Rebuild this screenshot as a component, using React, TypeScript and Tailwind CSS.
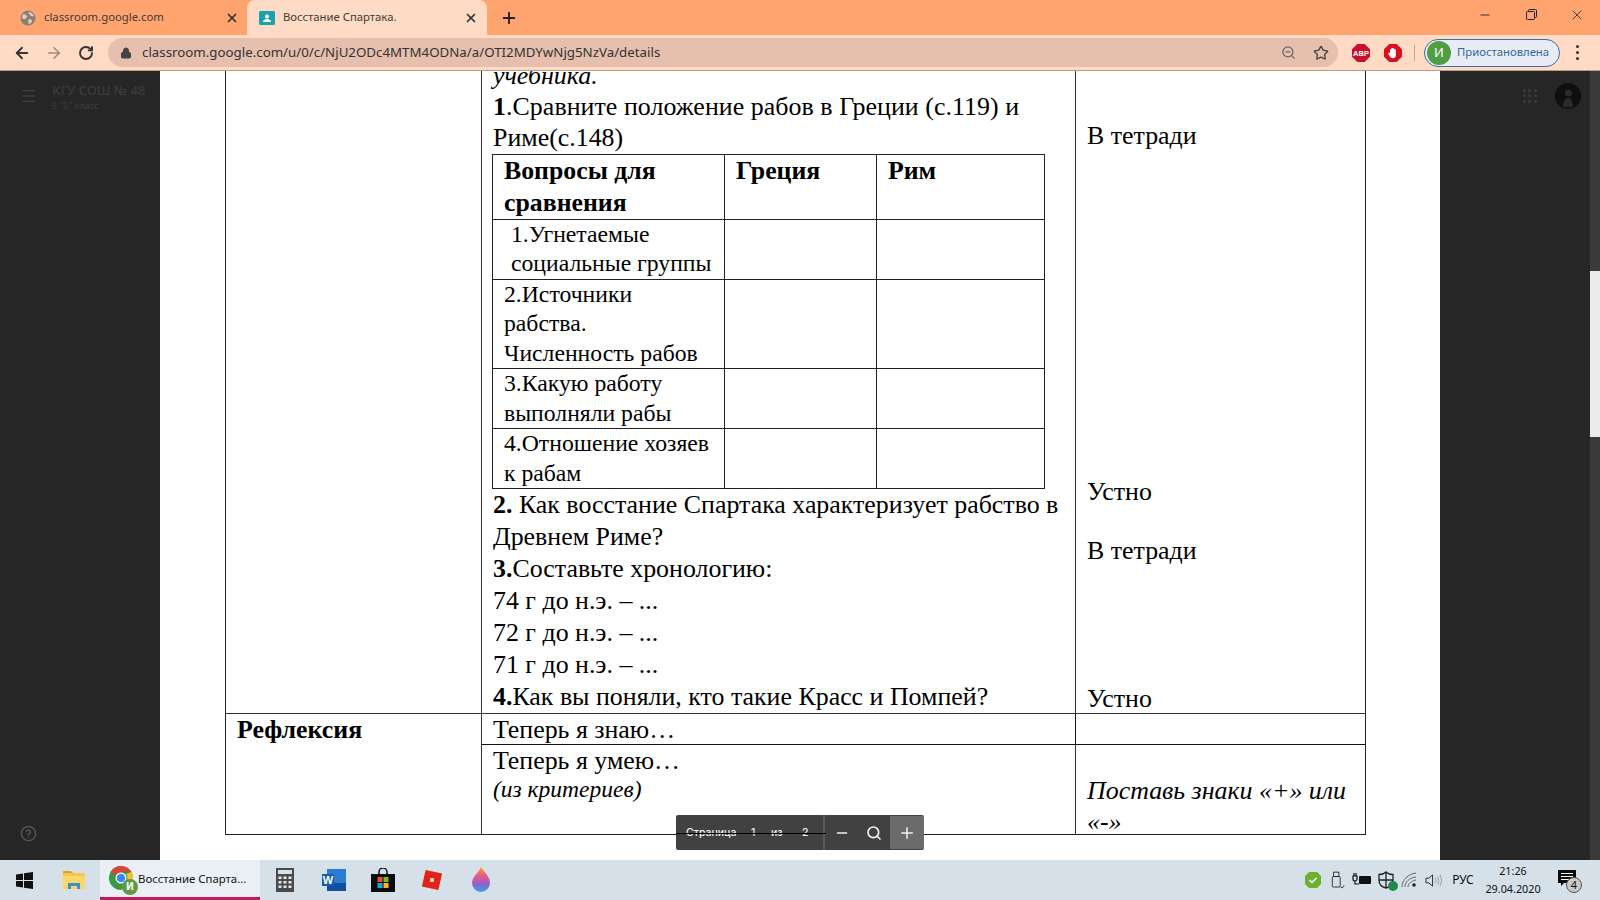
import { ArrowLeft, ArrowRight, RotateCw, Lock, ZoomOut, Search, Star, X, Plus, Minus, Menu, HelpCircle } from 'lucide-react';

const ui = 'font-["Noto_Sans",sans-serif]';

const GlobeIcon = () => (
  <svg viewBox="0 0 16 16" className="w-[16px] h-[16px]">
    <circle cx="8" cy="8" r="7.5" fill="#8a8078" />
    <path d="M3 4c2 0 3 1 4 2s-1 2-2 3-2-1-3-1zM9 2c2 0 4 2 5 4-2 1-3 0-4-1s-2-2-1-3zM9 9c2 0 3 1 3 2s-2 3-3 3-1-4 0-5z" fill="#e8c9b3" />
  </svg>
);

const ClassroomIcon = () => (
  <svg viewBox="0 0 16 16" className="w-[16px] h-[16px]">
    <rect x="0" y="1" width="16" height="14" rx="1.5" fill="#17a2ad" />
    <circle cx="8" cy="6.5" r="2" fill="#fff" />
    <path d="M4 12c0-2 2-3 4-3s4 1 4 3z" fill="#fff" />
  </svg>
);

const AbpIcon = () => (
  <svg viewBox="0 0 18 18" className="w-[18px] h-[18px]">
    <path d="M5.3 0h7.4L18 5.3v7.4L12.7 18H5.3L0 12.7V5.3z" fill="#c8102e" />
    <text x="9" y="12" textAnchor="middle" fontSize="7.5" fontWeight="700" fill="#fff" fontFamily="Liberation Sans">ABP</text>
  </svg>
);

const StopIcon = () => (
  <svg viewBox="0 0 18 18" className="w-[18px] h-[18px]">
    <path d="M5.3 0h7.4L18 5.3v7.4L12.7 18H5.3L0 12.7V5.3z" fill="#d6121f" />
    <path d="M6 9V5.5a.8.8 0 0 1 1.4 0V4.2a.8.8 0 0 1 1.5 0v.6a.8.8 0 0 1 1.5 0v1a.8.8 0 0 1 1.5 0V11c0 2-1.3 3.2-3 3.2-1.600 0-2.400-.8-3.200-2.200L4.300 9.800c-.5-.8.5-1.500 1.100-.9z" fill="#fff" />
  </svg>
);

const RestoreIcon = () => (
  <svg viewBox="0 0 11 11" className="w-[11px] h-[11px]" fill="none" stroke="#222" strokeWidth="1">
    <rect x="0.5" y="2.500" width="8" height="8" rx="1" />
    <path d="M2.500 2.500V1.500a1 1 0 0 1 1-1h6a1 1 0 0 1 1 1v6a1 1 0 0 1-1 1h-1" />
  </svg>
);

const WinIcon = () => (
  <svg viewBox="0 0 17 17" className="w-[17px] h-[17px]" fill="#111">
    <path d="M0 2.400 7 1.400V8H0zM8 1.300 17 0v8H8zM0 9h7v6.600l-7-1zM8 9h9v8l-9-1.300z" />
  </svg>
);

const FolderIcon = () => (
  <svg viewBox="0 0 22 20" className="w-[22px] h-[20px]">
    <path d="M0 2a1 1 0 0 1 1-1h7l2 2h-10z" fill="#d9a520" />
    <rect x="0" y="3" width="22" height="16" fill="#f4c64f" />
    <rect x="0" y="6" width="22" height="13" fill="#fbd76b" />
    <path d="M5 19v-6h12v6h-3v-3H8v3z" fill="#3f8fcf" />
  </svg>
);

const ChromeIcon = () => (
  <div className="relative w-[26px] h-[26px]">
    <svg viewBox="0 0 24 24" className="w-[24px] h-[24px]">
      <circle cx="12" cy="12" r="12" fill="#3a9a4a" />
      <path d="M12 0a12 12 0 0 1 10.400 6H12a6 6 0 0 0-5.800 4.500L2.200 5A12 12 0 0 1 12 0z" fill="#d9453a" />
      <path d="M22.400 6A12 12 0 0 1 12 24l4.500-7.500A6 6 0 0 0 17 8z" fill="#f3c02e" />
      <circle cx="12" cy="12" r="5.500" fill="#fff" />
      <circle cx="12" cy="12" r="4.300" fill="#4285f4" />
    </svg>
    <div className="absolute right-[-3px] bottom-[-3px] w-[16px] h-[16px] rounded-full bg-[#5e9b46] text-white text-[10px] font-bold flex items-center justify-center">И</div>
  </div>
);

const CalcIcon = () => (
  <svg viewBox="0 0 18 24" className="w-[18px] h-[24px]">
    <rect width="18" height="24" fill="#4a4a4a" />
    <rect x="2" y="2" width="14" height="4" fill="#d8e1e8" />
    {[8.5, 13, 17.5].map(y => [2.500, 7.500, 12.500].map(x => <rect key={`${x}-${y}`} x={x} y={y} width="3" height="2.500" fill="#e5e5e5" />))}
  </svg>
);

const WordIcon = () => (
  <svg viewBox="0 0 24 22" className="w-[24px] h-[22px]">
    <rect x="5" y="0" width="19" height="22" fill="#2b7cd3" />
    <rect x="5" y="14" width="19" height="8" fill="#124d9e" />
    <rect x="0" y="5" width="12" height="12" fill="#1a5cae" />
    <text x="6" y="15" textAnchor="middle" fontSize="11" fontWeight="700" fill="#fff" fontFamily="Liberation Sans">W</text>
  </svg>
);

const StoreIcon = () => (
  <svg viewBox="0 0 24 24" className="w-[24px] h-[24px]">
    <path d="M8 6V4a4 4 0 0 1 8 0v2" fill="none" stroke="#111" strokeWidth="1.500" />
    <rect x="0" y="6" width="24" height="18" fill="#0c0c0c" />
    <rect x="6.500" y="9" width="5" height="5" fill="#e8502e" />
    <rect x="12.500" y="9" width="5" height="5" fill="#7fb91e" />
    <rect x="6.500" y="15" width="5" height="5" fill="#1ba4e6" />
    <rect x="12.500" y="15" width="5" height="5" fill="#f6b80e" />
  </svg>
);

const RobloxIcon = () => (
  <svg viewBox="0 0 24 24" className="w-[22px] h-[22px]">
    <path d="M5 1 23 5 19 23 1 19z" fill="#e2231a" />
    <rect x="10" y="10" width="4" height="4" fill="#f4e5e2" />
  </svg>
);

const PaintIcon = () => (
  <svg viewBox="0 0 20 26" className="w-[20px] h-[26px]">
    <defs>
      <linearGradient id="drop" x1="0" y1="0" x2="0" y2="1">
        <stop offset="0" stopColor="#f6a623" />
        <stop offset="0.35" stopColor="#e8598a" />
        <stop offset="0.7" stopColor="#8a63d2" />
        <stop offset="1" stopColor="#2fa8e0" />
      </linearGradient>
    </defs>
    <path d="M10 0c2 4 9 9 9 16a9 9 0 0 1-18 0C1 10 8 5 10 0z" fill="url(#drop)" />
  </svg>
);

const TrayShield = () => (
  <svg viewBox="0 0 16 16" className="w-[16px] h-[16px]">
    <path d="M4 0h8l4 4v8l-4 4H4l-4-4V4z" fill="#6cb02e" />
    <path d="M4.500 8l2.500 2.500 4.500-4.500" stroke="#fff" strokeWidth="1.500" fill="none" />
  </svg>
);

const UsbIcon = () => (
  <svg viewBox="0 0 16 20" className="w-[14px] h-[18px]" fill="none" stroke="#222" strokeWidth="1">
    <rect x="3" y="1" width="6" height="5" />
    <rect x="1.500" y="6" width="9" height="12" rx="1" />
    <path d="M11 18l2 1 2-3" />
  </svg>
);

const PowerIcon = () => (
  <svg viewBox="0 0 20 14" className="w-[20px] h-[14px]">
    <rect x="7" y="3" width="12" height="8" rx="1" fill="#111" />
    <path d="M1 3v3a2 2 0 0 0 4 0V3zM2 0v3M4 0v3M3 8v3h4" stroke="#111" fill="none" strokeWidth="1.200" />
  </svg>
);

const DefenderIcon = () => (
  <div className="relative w-[18px] h-[18px]">
    <svg viewBox="0 0 18 18" className="w-[18px] h-[18px]" fill="none" stroke="#222" strokeWidth="1.300">
      <path d="M9 1c2 2 4 2.500 7 2.500V9c0 4-3 7-7 8-4-1-7-4-7-8V3.500C5 3.500 7 3 9 1zM9 1v16M2 9h14" />
    </svg>
    <div className="absolute right-[-3px] bottom-[-2px] w-[10px] h-[10px] rounded-full bg-[#1f8a4c]" />
  </div>
);

const WifiIcon = () => (
  <svg viewBox="0 0 18 16" className="w-[18px] h-[16px]" fill="none" stroke="#666" strokeWidth="1">
    <path d="M1 15C1 8 7 2 15 1M4 15c0-5 4-9 11-10M7 15c0-3 3-6 8-7" />
    <circle cx="13" cy="13" r="1.800" fill="#222" stroke="none" />
  </svg>
);

const VolumeIcon = () => (
  <svg viewBox="0 0 18 16" className="w-[17px] h-[15px]" fill="none" stroke="#222" strokeWidth="1">
    <path d="M1 5.500h3L8 2v12l-4-3.500H1z" />
    <path d="M11 5c1 2 1 4 0 6M13.500 3.500c1.500 3 1.500 6 0 9M16 2c2 4 2 8 0 12" stroke="#999" />
  </svg>
);

const NotifyIcon = () => (
  <div className="relative w-[20px] h-[20px]">
    <svg viewBox="0 0 18 17" className="w-[18px] h-[17px]">
      <path d="M0 0h18v13H6l-3 3v-3H0z" fill="#0c0c0c" />
      <path d="M3 3.500h12M3 6.500h12M3 9.500h8" stroke="#fff" strokeWidth="1" />
    </svg>
    <div className="absolute left-[8px] top-[7px] w-[16px] h-[16px] rounded-full bg-[#c9c9c9] border border-[#555] text-[#111] text-[11px] flex items-center justify-center">4</div>
  </div>
);

const rows = [
  { pad: 'pl-[18px] pr-0', h: 'h-[59px]', lines: ['1.Угнетаемые', 'социальные группы'] },
  { pad: 'pl-[11px]', h: 'h-[89.5px]', lines: ['2.Источники', 'рабства.', 'Численность рабов'] },
  { pad: 'pl-[11px]', h: 'h-[59.5px]', lines: ['3.Какую работу', 'выполняли рабы'] },
  { pad: 'pl-[11px]', h: 'h-[59.5px]', lines: ['4.Отношение хозяев', 'к рабам'] },
];

function CompareTable() {
  return (
    <table className="-ml-px table-fixed w-[553px] border-collapse border-[1.5px] border-[#222] text-[23.7px]">
      <colgroup>
        <col className="w-[232px]" />
        <col className="w-[152px]" />
        <col />
      </colgroup>
      <tbody>
        <tr className="h-[64.500px] align-top font-bold leading-[32px]">
          <td className="border-[1.5px] border-[#222] pl-[11px] text-[25.8px]">Вопросы для<br />сравнения</td>
          <td className="border-[1.5px] border-[#222] pl-[11px] text-[25.8px]">Греция</td>
          <td className="border-[1.5px] border-[#222] pl-[11px] text-[25.8px]">Рим</td>
        </tr>
        {rows.map(r => (
          <tr key={r.lines[0]} className={`${r.h} align-top leading-[29.5px]`}>
            <td className={`border-[1.5px] border-[#222] whitespace-nowrap ${r.pad}`}>
              {r.lines.map(l => <div key={l}>{l}</div>)}
            </td>
            <td className="border-[1.5px] border-[#222]" />
            <td className="border-[1.5px] border-[#222]" />
          </tr>
        ))}
      </tbody>
    </table>
  );
}

function Doc() {
  return (
    <div className="ml-[65px] w-[1141px] shrink-0 grid grid-cols-[256px_594px_1fr] border-[1.5px] border-[#222] font-['Liberation_Serif',serif] text-black text-[25.9px] leading-[32px]">
      {/* big row, its top is scrolled away */}
      <div className="border-r-[1.5px] border-b-[1.5px] border-[#333]" />
      <div className="border-r-[1.5px] border-b-[1.5px] border-[#333] pl-[11px]">
        <div className="italic leading-[31px]">учебника.</div>
        <div className="leading-[31px] tracking-[0.05px]"><b>1</b>.Сравните положение рабов в Греции (с.119) и</div>
        <div>Риме(с.148)</div>
        <CompareTable />
        <div><b>2.</b> Как восстание Спартака характеризует рабство в</div>
        <div>Древнем Риме?</div>
        <div><b>3.</b>Составьте хронологию:</div>
        <div>74 г до н.э. – ...</div>
        <div>72 г до н.э. – ...</div>
        <div>71 г до н.э. – ...</div>
        <div><b>4.</b>Как вы поняли, кто такие Красс и Помпей?</div>
      </div>
      <div className="border-b-[1.5px] border-[#333] pl-[11px] flex flex-col justify-end leading-[28px]">
        <div>В тетради</div>
        <div className="mt-[328px]">Устно</div>
        <div className="mt-[31px]">В тетради</div>
        <div className="mt-[120px]">Устно</div>
      </div>

      {/* reflection rows */}
      <div className="row-span-2 border-r-[1.5px] border-[#333] pl-[11px] font-bold">Рефлексия</div>
      <div className="h-[31px] border-r-[1.5px] border-b-[1.5px] border-[#111] pl-[11px] leading-[31px]">Теперь я знаю…</div>
      <div className="h-[31px] border-b-[1.5px] border-[#111]" />
      <div className="h-[89px] border-r-[1.5px] border-[#333] pl-[11px]">
        <div>Теперь я умею…</div>
        <div className="italic text-[23.5px] leading-[24px]">(из критериев)</div>
      </div>
      <div className="h-[89px] pl-[11px] pt-[30px] italic">
        <div className="whitespace-nowrap">Поставь знаки «+» или</div>
        <div className="leading-[29px]">«-»</div>
      </div>
    </div>
  );
}

function PdfBar() {
  return (
    <div className={`absolute left-[516px] bottom-[10px] w-[248px] h-[35px] bg-[#414141] rounded-[2px] flex items-center text-[#f1f1f1] text-[10.5px] font-medium font-['Inter',sans-serif]`}>
      <div className="absolute left-0 top-[18px] w-[150px] h-px bg-black" />
      <span className="ml-[10px] w-[65px]">Страница</span>
      <span className="w-[20px]">1</span>
      <span className="w-[31px]">из</span>
      <span className="w-[21px]">2</span>
      <div className="w-[2px] h-full bg-[#5a5a5a]" />
      <div className="w-[32px] flex justify-center ml-[1px]"><Minus size={16} /></div>
      <div className="w-[32px] flex justify-center"><Search size={16} strokeWidth={2.500} /></div>
      <div className="w-[34px] h-[33px] bg-[#6b6b6b] flex items-center justify-center"><Plus size={18} /></div>
    </div>
  );
}

export default function App() {
  return (
    <div className={`w-[1600px] h-[900px] flex flex-col overflow-hidden ${ui}`}>
      {/* tab strip */}
      <div className="h-[35px] shrink-0 bg-[#ffa46f] flex items-end text-[11.3px] text-[#3c3c3c]">
        <div className="w-[247px] h-full flex items-center pl-[20px]">
          <GlobeIcon />
          <span className="ml-[8px]">classroom.google.com</span>
          <X size={14} strokeWidth={3} className="ml-auto mr-[8px] text-[#333]" />
        </div>
        <div className="w-[240px] h-[35px] bg-[#ffdac4] rounded-t-lg flex items-center pl-[12px]">
          <ClassroomIcon />
          <span className="ml-[8px]">Восстание Спартака.</span>
          <X size={14} strokeWidth={3} className="ml-auto mr-[9px] text-[#333]" />
        </div>
        <div className="w-[44px] h-full flex items-center justify-center"><Plus size={18} strokeWidth={2.500} className="text-[#222]" /></div>
        <div className="ml-auto h-full flex items-center pb-[6px]">
          <div className="w-[46px] flex justify-center"><Minus size={14} className="text-[#222]" strokeWidth={1.500} /></div>
          <div className="w-[46px] flex justify-center"><RestoreIcon /></div>
          <div className="w-[46px] flex justify-center"><X size={16} strokeWidth={1.200} className="text-[#222]" /></div>
        </div>
      </div>

      {/* address bar */}
      <div className="h-[36px] shrink-0 bg-[#ffdac4] border-b-[1.5px] border-[#b89c89] flex items-center">
        <div className="w-[108px] flex items-center text-[#333]">
          <ArrowLeft size={18} strokeWidth={2.400} className="ml-[13px]" />
          <ArrowRight size={18} strokeWidth={2} className="ml-[14px] text-[#9a8a80]" />
          <RotateCw size={16} strokeWidth={2.800} className="ml-[15px]" />
        </div>
        <div className="w-[1230px] h-[29px] bg-[#e6bfae] rounded-full flex items-center pl-[12px] text-[13.3px] text-[#333]">
          <Lock size={12} fill="#444" className="text-[#444]" />
          <span className="ml-[10px]">classroom.google.com/u/0/c/NjU2ODc4MTM4ODNa/a/OTI2MDYwNjg5NzVa/details</span>
          <ZoomOut size={15} className="ml-auto text-[#666]" />
          <Star size={16} className="ml-[17px] mr-[9px] text-[#444]" />
        </div>
        <div className="ml-[14px]"><AbpIcon /></div>
        <div className="ml-[14px]"><StopIcon /></div>
        <div className="ml-[12px] w-px h-[16px] bg-[#c4a896]" />
        <div className="ml-[9px] w-[136px] h-[28px] rounded-full bg-[#e8ecf6] border border-[#3a6ea5] flex items-center pl-[2px] text-[11.3px] text-[#35659b]">
          <div className="w-[24px] h-[24px] rounded-full bg-[#4f9e3f] text-white text-[13px] flex items-center justify-center">И</div>
          <span className="ml-[6px]">Приостановлена</span>
        </div>
        <div className="ml-[16px] flex flex-col gap-[3px]">
          <div className="w-[3px] h-[3px] rounded-full bg-[#333]" />
          <div className="w-[3px] h-[3px] rounded-full bg-[#333]" />
          <div className="w-[3px] h-[3px] rounded-full bg-[#333]" />
        </div>
      </div>

      {/* page */}
      <div className="flex-1 min-h-0 flex">
        <div className="w-[160px] shrink-0 bg-[#262626] flex flex-col justify-between">
          <div className="flex pt-[10px] pl-[20px] text-[#3c3c3c]">
            <Menu size={18} className="mt-[6px]" />
            <div className="ml-[14px]">
              <div className="text-[13px] font-medium leading-[18px] whitespace-nowrap">КГУ СОШ № 48</div>
              <div className="text-[9px] leading-[14px]">5 "Б" класс</div>
            </div>
          </div>
          <HelpCircle size={17} className="ml-[20px] mb-[18px] text-[#555]" />
        </div>
        <div className="relative w-[1280px] shrink-0 bg-white flex flex-col justify-end overflow-hidden pb-[25px]">
          <Doc />
          <PdfBar />
        </div>
        <div className="w-[150px] shrink-0 bg-[#262626] flex justify-end pt-[12px] pr-[9px]">
          <div className="grid grid-cols-3 gap-[2px] w-[14px] h-[14px] mt-[6px] mr-[18px]">
            {Array.from({ length: 9 }).map((_, i) => <div key={i} className="w-[3px] h-[3px] rounded-full bg-[#3c3c3c]" />)}
          </div>
          <svg viewBox="0 0 26 26" className="w-[26px] h-[26px]">
            <circle cx="13" cy="13" r="13" fill="#0f0f0f" />
            <path d="M8 24c0-6 2-9 5-9s5 3 5 9zM10 10a3.500 3.500 0 0 1 7 0 3.500 3.500 0 0 1-7 0z" fill="#2a2a2a" />
          </svg>
        </div>
        <div className="w-[10px] shrink-0 bg-[#3a3a3a] pt-[200px]">
          <div className="h-[166px] bg-[#ececec]" />
        </div>
      </div>

      {/* taskbar */}
      <div className="h-[40px] shrink-0 bg-[#d6e0e9] flex items-center text-[#111]">
        <div className="w-[48px] flex justify-center"><WinIcon /></div>
        <div className="w-[52px] flex justify-center"><FolderIcon /></div>
        <div className="w-[160px] h-full bg-[#e9eff4] border-b-[3px] border-[#c2185b] flex items-center pl-[9px] text-[11.4px]">
          <ChromeIcon />
          <span className="ml-[3px] whitespace-nowrap">Восстание Спарта...</span>
        </div>
        <div className="w-[49px] flex justify-center"><CalcIcon /></div>
        <div className="w-[49px] flex justify-center"><WordIcon /></div>
        <div className="w-[49px] flex justify-center"><StoreIcon /></div>
        <div className="w-[49px] flex justify-center"><RobloxIcon /></div>
        <div className="w-[49px] flex justify-center"><PaintIcon /></div>
        <div className="ml-auto h-full flex items-center">
          <div className="w-[26px] flex justify-center"><TrayShield /></div>
          <div className="w-[24px] flex justify-center"><UsbIcon /></div>
          <div className="w-[24px] flex justify-center"><PowerIcon /></div>
          <div className="w-[24px] flex justify-center"><DefenderIcon /></div>
          <div className="w-[24px] flex justify-center"><WifiIcon /></div>
          <div className="w-[22px] flex justify-center"><VolumeIcon /></div>
          <div className="w-[38px] text-center text-[12px]">РУС</div>
          <div className="w-[62px] text-center text-[10.8px] leading-[18px]">
            <div>21:26</div>
            <div>29.04.2020</div>
          </div>
          <div className="w-[56px] flex justify-start pl-[14px]"><NotifyIcon /></div>
        </div>
      </div>
    </div>
  );
}
